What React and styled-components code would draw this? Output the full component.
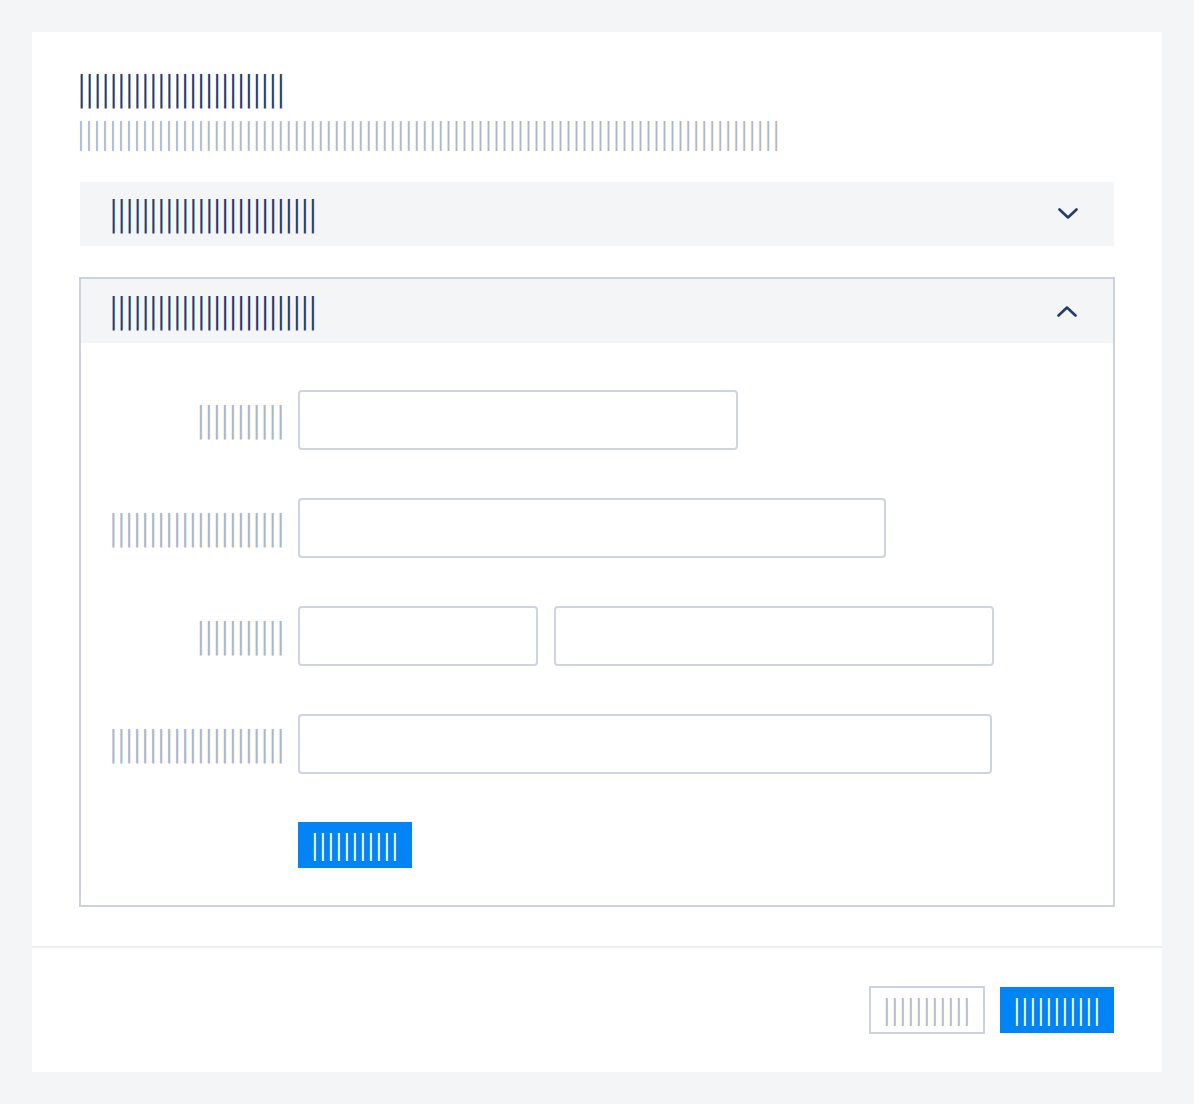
import React from "react";
import styled, { createGlobalStyle } from "styled-components";

const bars = (n) => "|".repeat(n);

const Global = createGlobalStyle`
  html, body {
    margin: 0;
    background: #f4f5f7;
    font-family: Roboto, "Liberation Sans", Arial, sans-serif;
  }
`;

const Page = styled.div`
  padding: 32px;
`;

const Card = styled.div`
  background: #ffffff;
  display: flex;
  flex-direction: column;
`;

const Body = styled.div`
  padding: 37px 48px 39px;
  display: flex;
  flex-direction: column;
`;

const Title = styled.h1`
  margin: 0 0 0 -3px;
  font-size: 41px;
  line-height: 40px;
  font-weight: 300;
  letter-spacing: -1.1px;
  color: #263c68;
  white-space: nowrap;
`;

const Subtitle = styled.p`
  margin: 9px 0 30px -3px;
  font-size: 35px;
  line-height: 34px;
  font-weight: 300;
  letter-spacing: 0.25px;
  color: #adb6c6;
  white-space: nowrap;
`;

const Section = styled.div`
  border: ${(p) => (p.$open ? "2px solid #cdd3dd" : "none")};
  margin: ${(p) => (p.$open ? "0 -1px" : "0 0 31px")};
`;

const Header = styled.div`
  height: 64px;
  background: #f4f5f7;
  display: flex;
  align-items: center;
  justify-content: space-between;
  padding: 0 36px 0 ${(p) => (p.$open ? "28px" : "29px")};
`;

const HeaderText = styled.span`
  font-size: 41px;
  line-height: 40px;
  font-weight: 300;
  letter-spacing: -1.1px;
  color: #263c68;
  white-space: nowrap;
`;

const Chevron = ({ up }) => (
  <svg width="20" height="12" viewBox="0 0 20 12" fill="none">
    <polyline
      points={up ? "1.5,10.5 10,2.5 18.5,10.5" : "1.5,1.5 10,9.5 18.5,1.5"}
      stroke="#263c68"
      strokeWidth="2.6"
      strokeLinecap="round"
      strokeLinejoin="round"
    />
  </svg>
);

const Form = styled.div`
  display: grid;
  grid-template-columns: 188px 1fr;
  column-gap: 14px;
  row-gap: 48px;
  align-items: center;
  padding: 47px 31px 37px 15px;
`;

const Label = styled.label`
  text-align: right;
  font-size: 41px;
  line-height: 40px;
  font-weight: 300;
  letter-spacing: -1.1px;
  color: #adb6c6;
  white-space: nowrap;
`;

const Fields = styled.div`
  display: flex;
  gap: 16px;
`;

const Input = styled.input`
  box-sizing: border-box;
  width: ${(p) => p.$w}px;
  height: 60px;
  border: 2px solid #cfd4de;
  border-radius: 4px;
  background: #fff;
  outline: none;
`;

const Button = styled.button`
  box-sizing: border-box;
  height: ${(p) => (p.$ghost ? 48 : 46)}px;
  width: ${(p) => (p.$ghost ? 116 : 114)}px;
  padding: 0;
  border: ${(p) => (p.$ghost ? "2px solid #cdd3dd" : "none")};
  background: ${(p) => (p.$ghost ? "#fff" : "#0284f4")};
  color: ${(p) => (p.$ghost ? "#adb6c6" : "#ffffff")};
  font-family: Roboto, "Liberation Sans", Arial, sans-serif;
  font-size: 34px;
  font-weight: 300;
  line-height: 30px;
  letter-spacing: 0.5px;
  cursor: pointer;
  white-space: nowrap;
`;

const Footer = styled.div`
  border-top: 2px solid #ebecf0;
  height: 124px;
  padding: 0 48px;
  display: flex;
  align-items: center;
  justify-content: flex-end;
  gap: 15px;
`;

const Spacer = styled.div``;

export default function App() {
  return (
    <>
      <Global />
      <Page>
        <Card>
          <Body>
            <Title>{bars(26)}</Title>
            <Subtitle>{bars(88)}</Subtitle>

            <Section>
              <Header>
                <HeaderText>{bars(26)}</HeaderText>
                <Chevron />
              </Header>
            </Section>

            <Section $open>
              <Header $open>
                <HeaderText>{bars(26)}</HeaderText>
                <Chevron up />
              </Header>
              <Form>
                <Label>{bars(11)}</Label>
                <Fields>
                  <Input $w={440} />
                </Fields>

                <Label>{bars(22)}</Label>
                <Fields>
                  <Input $w={588} />
                </Fields>

                <Label>{bars(11)}</Label>
                <Fields>
                  <Input $w={240} />
                  <Input $w={440} />
                </Fields>

                <Label>{bars(22)}</Label>
                <Fields>
                  <Input $w={694} />
                </Fields>

                <Spacer />
                <Fields>
                  <Button>{bars(11)}</Button>
                </Fields>
              </Form>
            </Section>
          </Body>
          <Footer>
            <Button $ghost>{bars(11)}</Button>
            <Button>{bars(11)}</Button>
          </Footer>
        </Card>
      </Page>
    </>
  );
}
